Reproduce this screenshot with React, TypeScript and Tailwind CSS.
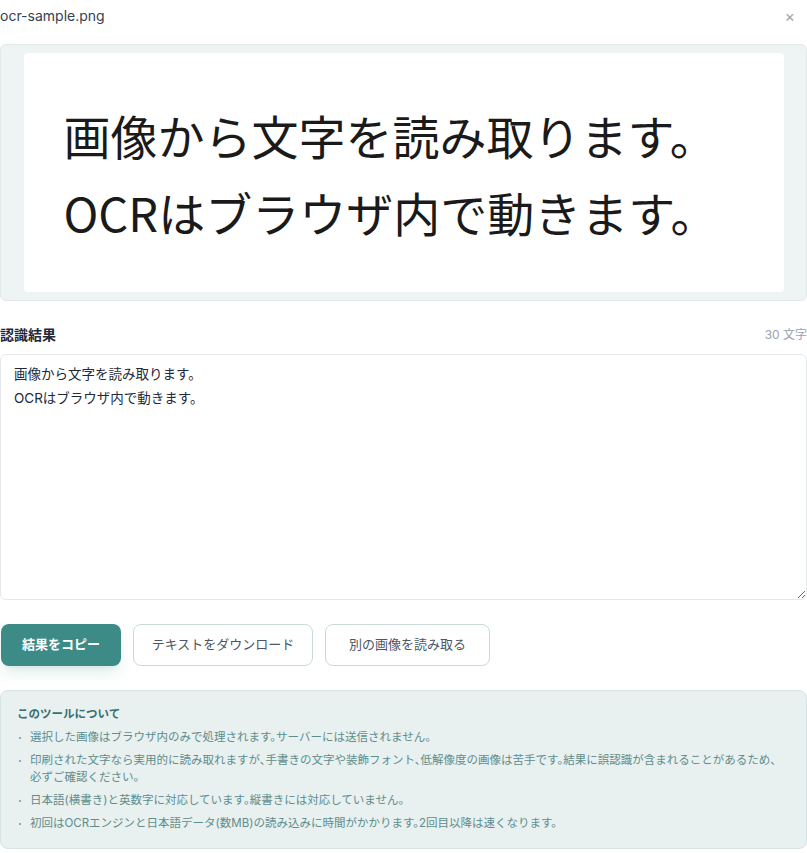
import React from 'react';

const recognized = '画像から文字を読み取ります。\nOCRはブラウザ内で動きます。';

const notes: string[] = [
    '選択した画像はブラウザ内のみで処理されます。サーバーには送信されません。',
    '印刷された文字なら実用的に読み取れますが、手書きの文字や装飾フォント、低解像度の画像は苦手です。結果に誤認識が含まれることがあるため、必ずご確認ください。',
    '日本語(横書き)と英数字に対応しています。縦書きには対応していません。',
    '初回はOCRエンジンと日本語データ(数MB)の読み込みに時間がかかります。2回目以降は速くなります。',
];

export default function App() {
    const charCount = recognized.replace(/\s/g, '').length + 1;

    return (
        <div className="w-[807px] bg-white font-[Inter,'Noto_Sans_CJK_JP',sans-serif] text-gray-800">
            {/* file name + close */}
            <div className="flex h-8 items-center justify-between">
                <span className="text-sm text-gray-700">ocr-sample.png</span>
                <button className="mr-[12px] text-base leading-none text-[#9aa7ad]">×</button>
            </div>

            {/* preview of the selected image */}
            <div className="mt-3 rounded-md border border-[#e2e9e9] bg-[#eef3f3] py-2">
                <div className="mx-auto flex h-[239px] w-[760px] flex-col justify-center rounded-sm bg-white pl-10 font-['Noto_Sans_CJK_JP',sans-serif] text-[47px] leading-[77px] text-[#1a1a1a]">
                    <p>画像から文字を読み取ります。</p>
                    <p>OCRはブラウザ内で動きます。</p>
                </div>
            </div>

            {/* result */}
            <div className="mt-6 mb-[9px] flex h-5 items-center justify-between">
                <h3 className="text-sm font-bold text-gray-800">認識結果</h3>
                <span className="text-xs text-gray-400">{charCount} 文字</span>
            </div>
            <textarea
                readOnly
                defaultValue={recognized}
                className="block h-[246px] w-full rounded-md border border-gray-200 px-[13px] py-[7px] font-[Inter,'Noto_Sans_CJK_JP',sans-serif] text-[13.5px] leading-6 text-gray-800 outline-none"
            />

            <div className="mt-6 flex gap-3 pl-px">
                <button className="h-[42px] w-[120px] rounded-lg bg-[#3d8b87] text-[13px] font-bold text-white shadow-lg shadow-[#3d8b87]/15">
                    結果をコピー
                </button>
                <button className="h-[42px] w-[180px] rounded-lg border border-[#c9dbd9] bg-white text-[13px] text-gray-600">
                    テキストをダウンロード
                </button>
                <button className="h-[42px] w-[165px] rounded-lg border border-[#c9dbd9] bg-white text-[13px] text-gray-600">
                    別の画像を読み取る
                </button>
            </div>

            {/* about this tool */}
            <div className="mt-6 rounded-lg border border-[#d5e3e3] bg-[#e8f0f0] px-4 pt-[14px] pb-4 [font-feature-settings:'halt']">
                <h4 className="text-[11.5px] leading-[18px] font-bold text-[#3b6e6e]">このツールについて</h4>
                <ul className="mt-[6px] flex flex-col gap-[6px] pr-2">
                    {notes.map((note) => (
                        <li key={note} className="flex text-[11.5px] leading-[17px] text-[#5f8d8b]">
                            <span className="flex h-[17px] w-[13px] shrink-0 items-center pl-[2px]">
                                <span className="h-[2px] w-[2px] rounded-full bg-[#6f9694]" />
                            </span>
                            <span>{note}</span>
                        </li>
                    ))}
                </ul>
            </div>
        </div>
    );
}
